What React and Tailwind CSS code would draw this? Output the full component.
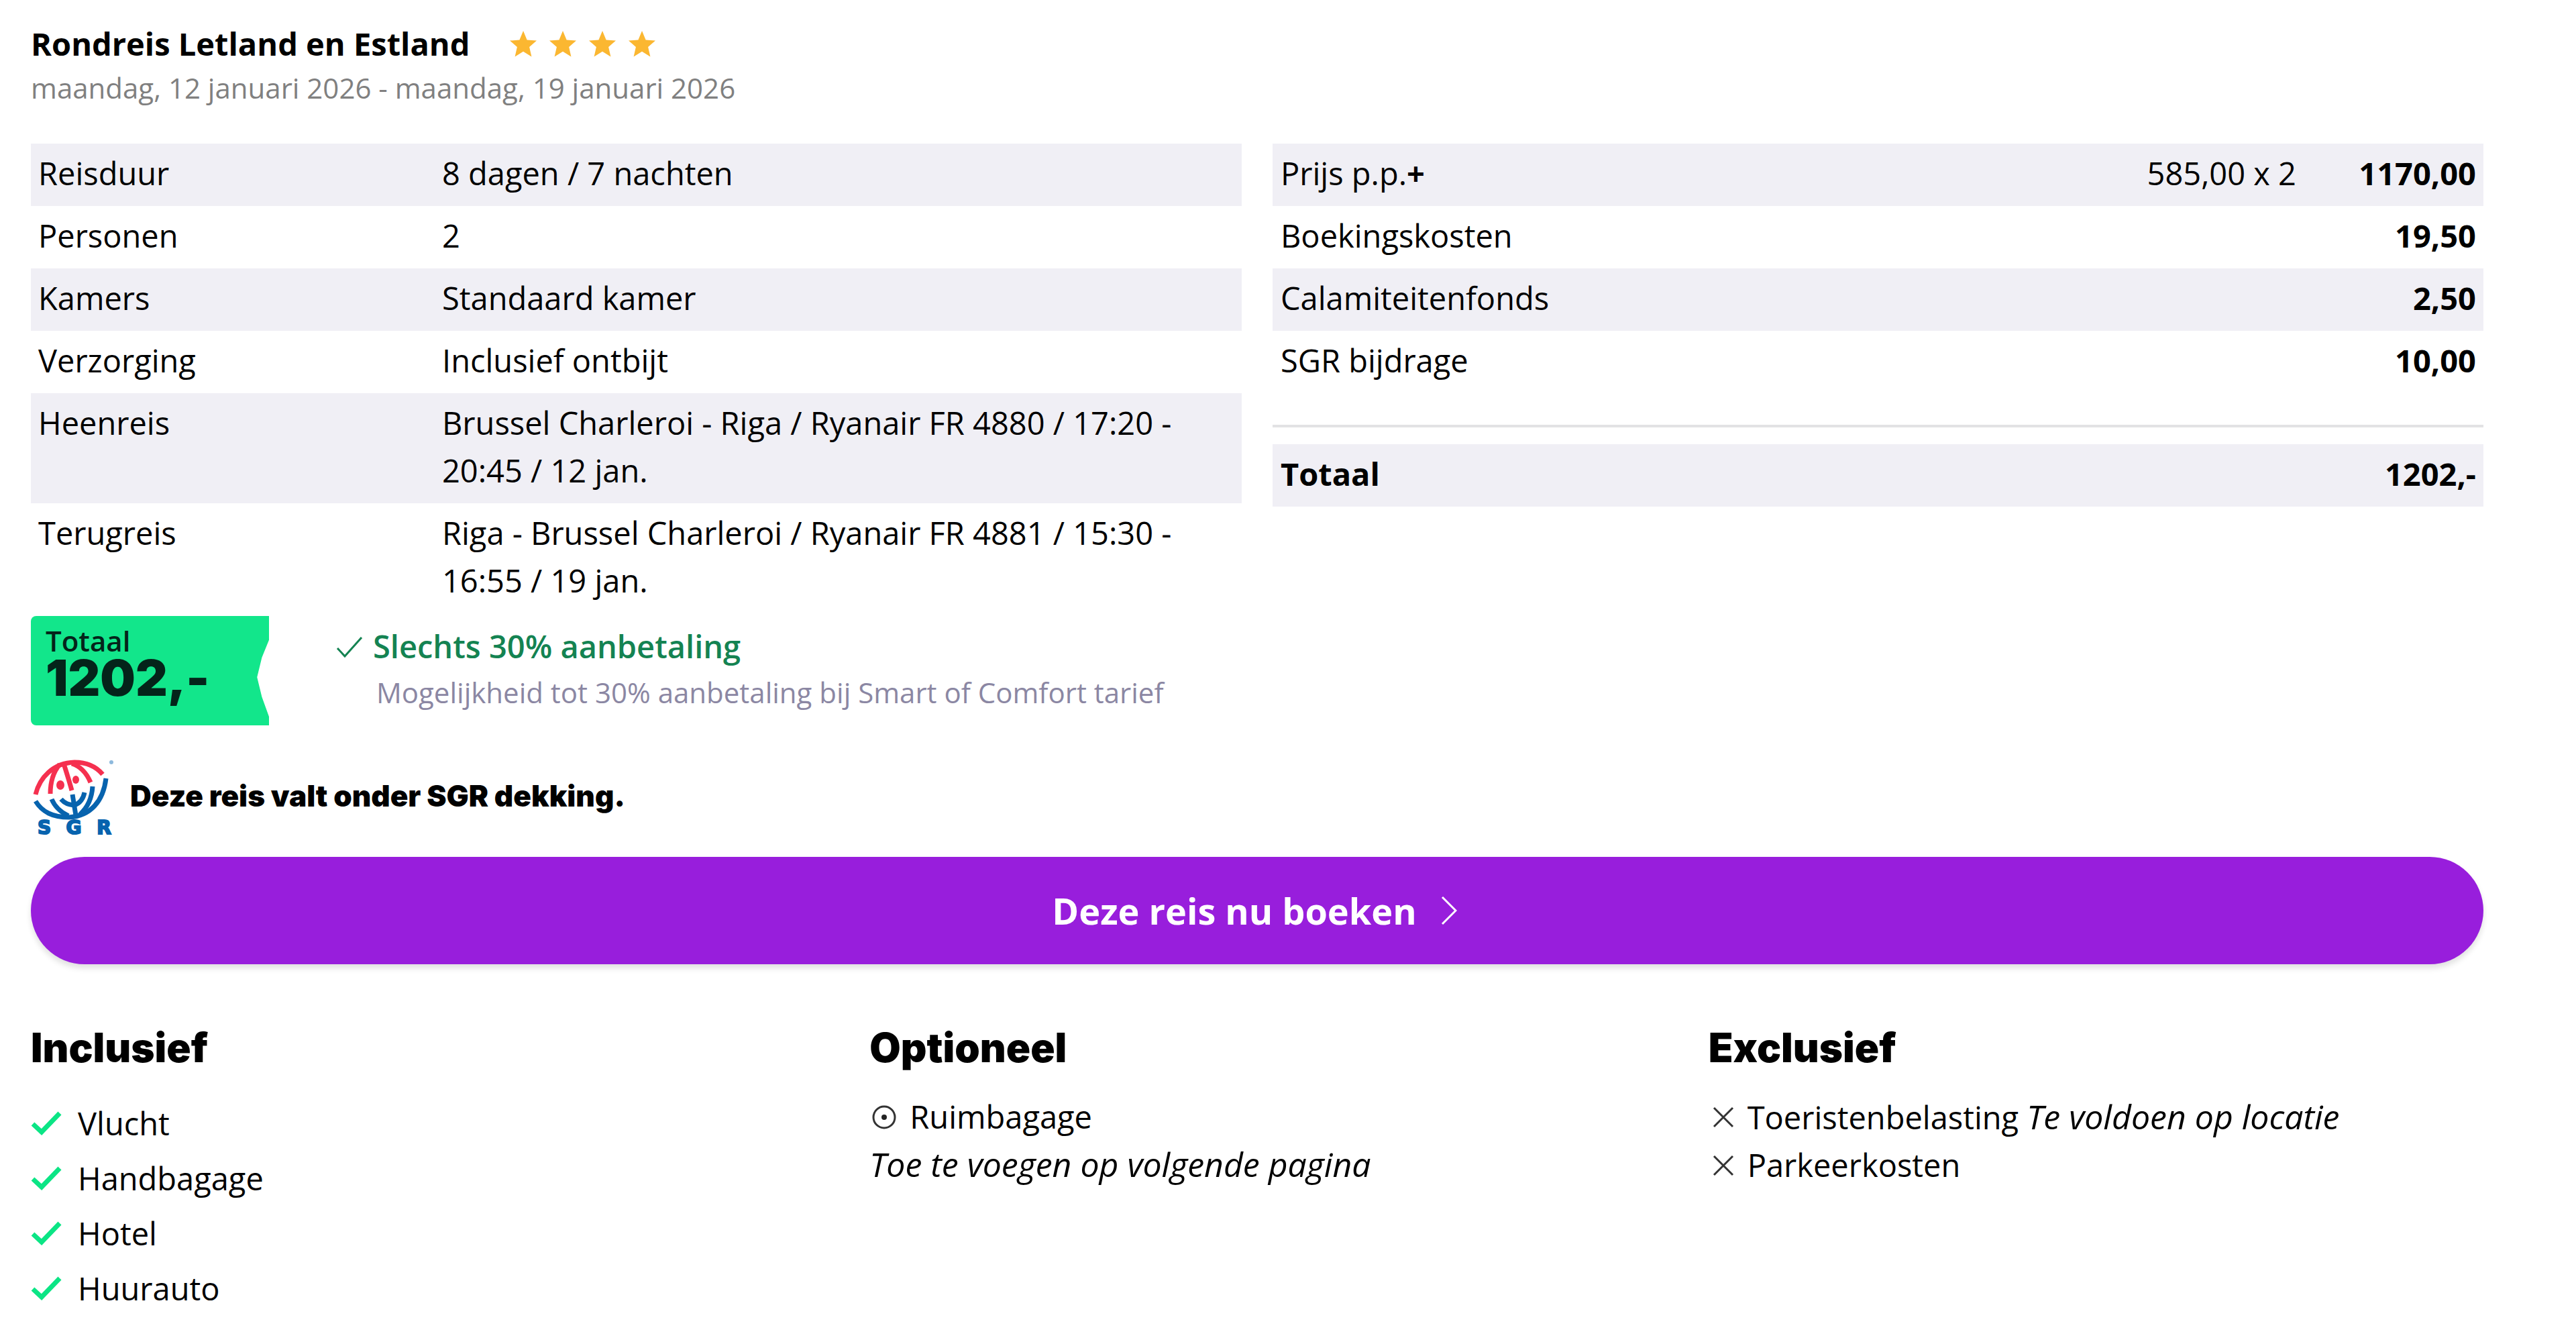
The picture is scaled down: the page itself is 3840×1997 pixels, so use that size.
const details = [
  { label: "Reisduur", value: "8 dagen / 7 nachten" },
  { label: "Personen", value: "2" },
  { label: "Kamers", value: "Standaard kamer" },
  { label: "Verzorging", value: "Inclusief ontbijt" },
  {
    label: "Heenreis",
    value: "Brussel Charleroi - Riga / Ryanair FR 4880 / 17:20 - 20:45 / 12 jan.",
  },
  {
    label: "Terugreis",
    value: "Riga - Brussel Charleroi / Ryanair FR 4881 / 15:30 - 16:55 / 19 jan.",
  },
];

const prices = [
  { label: "Prijs p.p.", plus: true, calc: "585,00 x 2", amount: "1170,00" },
  { label: "Boekingskosten", amount: "19,50" },
  { label: "Calamiteitenfonds", amount: "2,50" },
  { label: "SGR bijdrage", amount: "10,00" },
];

const included = ["Vlucht", "Handbagage", "Hotel", "Huurauto"];

const Star = () => (
  <svg className="size-10" viewBox="0 0 40 40" fill="#fbb731">
    <path d="M20 0l5.6 13.4 14.4 1.2-10.9 9.5 3.3 14.3L20 30.8 7.6 38.4l3.3-14.3L0 14.6l14.4-1.2z" />
  </svg>
);

const CheckIcon = () => (
  <svg className="w-[46px] h-9 shrink-0" viewBox="0 0 46 36" fill="none">
    <path
      d="M3 19l13 12L43 3"
      stroke="#0be585"
      strokeWidth="7"
      strokeLinejoin="miter"
    />
  </svg>
);

const CrossIcon = () => (
  <svg className="size-8 shrink-0" viewBox="0 0 32 32" fill="none">
    <path d="M2 2l28 28M30 2L2 30" stroke="#333" strokeWidth="3" />
  </svg>
);

const SgrLogo = () => (
  <svg
    className="w-[126px] h-[126px] shrink-0 overflow-visible"
    viewBox="27 18 126 126"
    fill="none"
    role="img"
    aria-label="SGR"
  >
    <g stroke="#f5304f" strokeWidth="7">
      <path d="M34 75C40 50 60 28 92 27c18 0 32 6 42 18" />
      <path d="M56 74c0-17 4-32 14-44" />
      <path d="M76 29c4 13 8 25 12 40" />
      <path d="M88 29c13 4 22 14 28 28" />
    </g>
    <ellipse cx="71" cy="61" rx="6" ry="7" fill="#f5304f" />
    <ellipse cx="94" cy="53" rx="5" ry="6" fill="#f5304f" />
    <g stroke="#0763ae" strokeWidth="7">
      <path d="M34 85c10 16 25 24 50 24 32-2 51-24 55-58" />
      <path d="M58 82c5 12 13 19 25 25" />
      <path d="M72 82c7 8 13 8 20 9 8-3 13-9 15-19" />
      <path d="M89 75l5 31" />
      <path d="M119 63c-1 18-7 31-19 42" />
    </g>
    <circle cx="147" cy="27" r="3" fill="#8db9dd" />
    <g
      fill="#0763ae"
      stroke="#0763ae"
      strokeWidth="2"
      className="font-['DejaVu_Sans'] font-bold text-[28px]"
    >
      <text x="47" y="134" textAnchor="middle">
        S
      </text>
      <text x="91" y="134" textAnchor="middle">
        G
      </text>
      <text x="136" y="134" textAnchor="middle">
        R
      </text>
    </g>
  </svg>
);

const TripDetails = () => (
  <table className="w-full table-fixed text-left">
    <tbody>
      {details.map((row) => (
        <tr key={row.label} className="align-top odd:bg-[#f0eff5]">
          <th
            scope="row"
            className="w-[602px] pl-[11px] pt-[9px] pb-[13px] font-normal"
          >
            {row.label}
          </th>
          <td className="px-[11px] pt-[9px] pb-[13px]">{row.value}</td>
        </tr>
      ))}
    </tbody>
  </table>
);

const PriceTable = () => (
  <table className="w-full text-left">
    <tbody>
      {prices.map((row) => (
        <tr key={row.label} className="odd:bg-[#f0eff5]">
          <th scope="row" className="px-3 pt-[9px] pb-[13px] font-normal">
            {row.label}
            {row.plus && <b>+</b>}
          </th>
          <td className="pt-[9px] pb-[13px] text-right">{row.calc}</td>
          <td className="w-[279px] pr-[11px] pt-[9px] pb-[13px] text-right font-bold">
            {row.amount}
          </td>
        </tr>
      ))}
      <tr>
        <td colSpan={3} className="pt-[47px] pb-[25px]">
          <hr className="border-t-4 border-[#e2e2e4]" />
        </td>
      </tr>
      <tr className="bg-[#f0eff5] font-bold">
        <th scope="row" className="px-3 pt-[9px] pb-[13px]">
          Totaal
        </th>
        <td />
        <td className="pr-[11px] pt-[9px] pb-[13px] text-right">1202,-</td>
      </tr>
    </tbody>
  </table>
);

const TotalRibbon = () => (
  <div className="w-[355px] h-[163px] shrink-0 rounded-l-lg bg-[#12e68b] pl-[22px] pt-[15px] text-[#04241a] [clip-path:polygon(0_0,100%_0,100%_22%,97%_38%,95%_56%,97%_74%,100%_92%,100%_100%,0_100%)]">
    <div className="text-[42px] leading-[44px] font-semibold">Totaal</div>
    <div className="font-['Inter'] text-[74px] leading-[66px] font-black">
      1202,-
    </div>
  </div>
);

const ColumnTitle = ({ children }) => (
  <h2 className="mb-8 font-['Inter'] text-[60px] leading-[72px] font-black">
    {children}
  </h2>
);

const App = () => {
  return (
    <main className="bg-white pl-[46px] pr-[138px] pt-[30px] font-['Open_Sans',sans-serif] text-[47px] leading-[71px] text-black">
      <header>
        <div className="flex items-center">
          <h1 className="font-bold">Rondreis Letland en Estland</h1>
          <div
            className="ml-[60px] flex gap-[19px]"
            role="img"
            aria-label="4 sterren"
          >
            <Star />
            <Star />
            <Star />
            <Star />
          </div>
        </div>
        <p className="text-[42px] leading-[60px] text-[#808080]">
          maandag, 12 januari 2026 - maandag, 19 januari 2026
        </p>
      </header>

      <section className="mt-[53px] grid grid-cols-2 items-start gap-[46px]">
        <TripDetails />
        <PriceTable />
      </section>

      <section className="mt-1 flex">
        <TotalRibbon />
        <div className="ml-[100px] pt-[10px]">
          <div className="flex items-center gap-[15px] font-semibold text-[#148352]">
            <svg className="w-10 h-8" viewBox="0 0 40 32" fill="none">
              <path d="M2 18l11 12L38 2" stroke="#148352" strokeWidth="3" />
            </svg>
            Slechts 30% aanbetaling
          </div>
          <p className="pl-[60px] text-[42px] leading-[66px] text-[#8b87a3]">
            Mogelijkheid tot 30% aanbetaling bij Smart of Comfort tarief
          </p>
        </div>
      </section>

      <section className="mt-[46px] flex items-center gap-[22px]">
        <SgrLogo />
        <p className="pb-2 font-['Inter'] text-[44px] leading-[60px] font-black">
          Deze reis valt onder SGR dekking.
        </p>
      </section>

      <button
        type="button"
        className="mt-6 flex h-40 w-full items-center justify-center gap-9 rounded-full bg-[#981edc] pr-2 text-[54px] font-bold text-white shadow-[0_6px_8px_rgba(0,0,0,0.12)]"
      >
        Deze reis nu boeken
        <svg className="w-6 h-11" viewBox="0 0 24 44" fill="none">
          <path d="M2 2l20 20L2 42" stroke="white" strokeWidth="3" />
        </svg>
      </button>

      <section className="-mr-[95px] mt-[88px] grid grid-cols-3">
        <div>
          <ColumnTitle>Inclusief</ColumnTitle>
          <ul className="pt-1 leading-[82px]">
            {included.map((item) => (
              <li key={item} className="flex items-center gap-6">
                <CheckIcon />
                {item}
              </li>
            ))}
          </ul>
        </div>

        <div>
          <ColumnTitle>Optioneel</ColumnTitle>
          <ul>
            <li className="flex items-center gap-5 pl-1">
              <svg className="size-9" viewBox="0 0 36 36" fill="none">
                <circle cx="18" cy="18" r="16" stroke="#333" strokeWidth="3" />
                <circle cx="18" cy="18" r="4" fill="#222" />
              </svg>
              Ruimbagage
            </li>
          </ul>
          <em className="text-[50px]">Toe te voegen op volgende pagina</em>
        </div>

        <div>
          <ColumnTitle>Exclusief</ColumnTitle>
          <ul>
            <li className="flex items-center gap-5 pl-[6px]">
              <CrossIcon />
              <span>
                Toeristenbelasting{" "}
                <em className="text-[50px]">Te voldoen op locatie</em>
              </span>
            </li>
            <li className="flex items-center gap-5 pl-[6px]">
              <CrossIcon />
              Parkeerkosten
            </li>
          </ul>
        </div>
      </section>
    </main>
  );
};

export default App;
